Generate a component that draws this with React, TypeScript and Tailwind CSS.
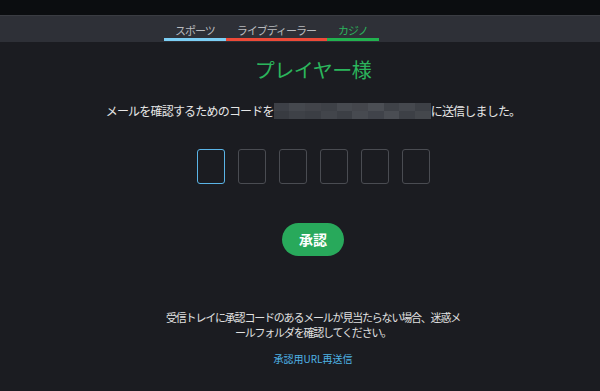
const tabs = [
  { label: "スポーツ", line: "border-[#7ccff5]", text: "text-[#b8babe]" },
  { label: "ライブディーラー", line: "border-[#ee4a38]", text: "text-[#b8babe]" },
  { label: "カジノ", line: "border-[#22b24f]", text: "text-[#2bb55c]" },
];

// pixelated blur over the e-mail address
const mosaic = [
  "#3d4047", "#45484e", "#42444a", "#3e4147", "#474a50", "#44464c", "#4b4e54", "#3f4248", "#45484e", "#3d4046",
  "#383b41", "#3e4147", "#3b3e44", "#42454b", "#3c3f45", "#474a50", "#40434a", "#4a4d53", "#3d4046", "#44474c",
];

function CodeBoxes() {
  return (
    <div className="mt-[30px] flex gap-[13px]">
      {[0, 1, 2, 3, 4, 5].map((i) => (
        <div
          key={i}
          className={`h-[35px] w-[28px] rounded-[3px] border bg-[#1b1c21] ${
            i === 0 ? "border-[#5ab4e6]" : "border-[#4a4c52]"
          }`}
        />
      ))}
    </div>
  );
}

export default function App() {
  return (
    <div
      className="min-h-[391px] w-full bg-[#1b1c21] text-[#e6e6e6]"
      style={{ fontFamily: '"Noto Sans CJK JP", "Noto Sans", sans-serif' }}
    >
      <div className="h-[15px] bg-[#0b0d10]" />

      <nav className="flex h-[27px] items-end border-t border-[#3a3c42] bg-[#2e3037] pb-px pl-[164px]">
        {tabs.map((t) => (
          <div
            key={t.label}
            className={`h-[23px] border-b-[3px] px-[11px] pt-[4px] text-[11px] leading-[17px] tracking-[-1px] ${t.line} ${t.text}`}
          >
            {t.label}
          </div>
        ))}
      </nav>

      <main className="flex flex-col items-center pl-[26px]">
        <h1 className="mt-[14px] text-[20px] leading-[28px] tracking-[-0.5px] text-[#2bb55c]">
          プレイヤー様
        </h1>

        <p className="mt-[19px] flex items-center text-[12px] leading-[16px] tracking-[-0.8px]">
          <span>メールを確認するためのコードを</span>
          <span className="grid h-[16px] w-[157px] grid-cols-10">
            {mosaic.map((c, i) => (
              <span key={i} style={{ backgroundColor: c }} />
            ))}
          </span>
          <span>に送信しました。</span>
        </p>

        <CodeBoxes />

        <button className="mt-[39px] h-[33px] w-[62px] rounded-full bg-[#28a95b] text-[14px] font-bold text-white">
          承認
        </button>

        <p className="mt-[54px] text-center text-[11px] leading-[15px] tracking-[-1.2px] text-[#e0e0e0]">
          <span className="block">受信トレイに承認コードのあるメールが見当たらない場合、迷惑メ</span>
          <span className="block">ールフォルダを確認してください。</span>
        </p>

        <a className="mt-[12px] text-[10px] leading-[14px] text-[#4eb3e6]">承認用URL再送信</a>
      </main>
    </div>
  );
}
